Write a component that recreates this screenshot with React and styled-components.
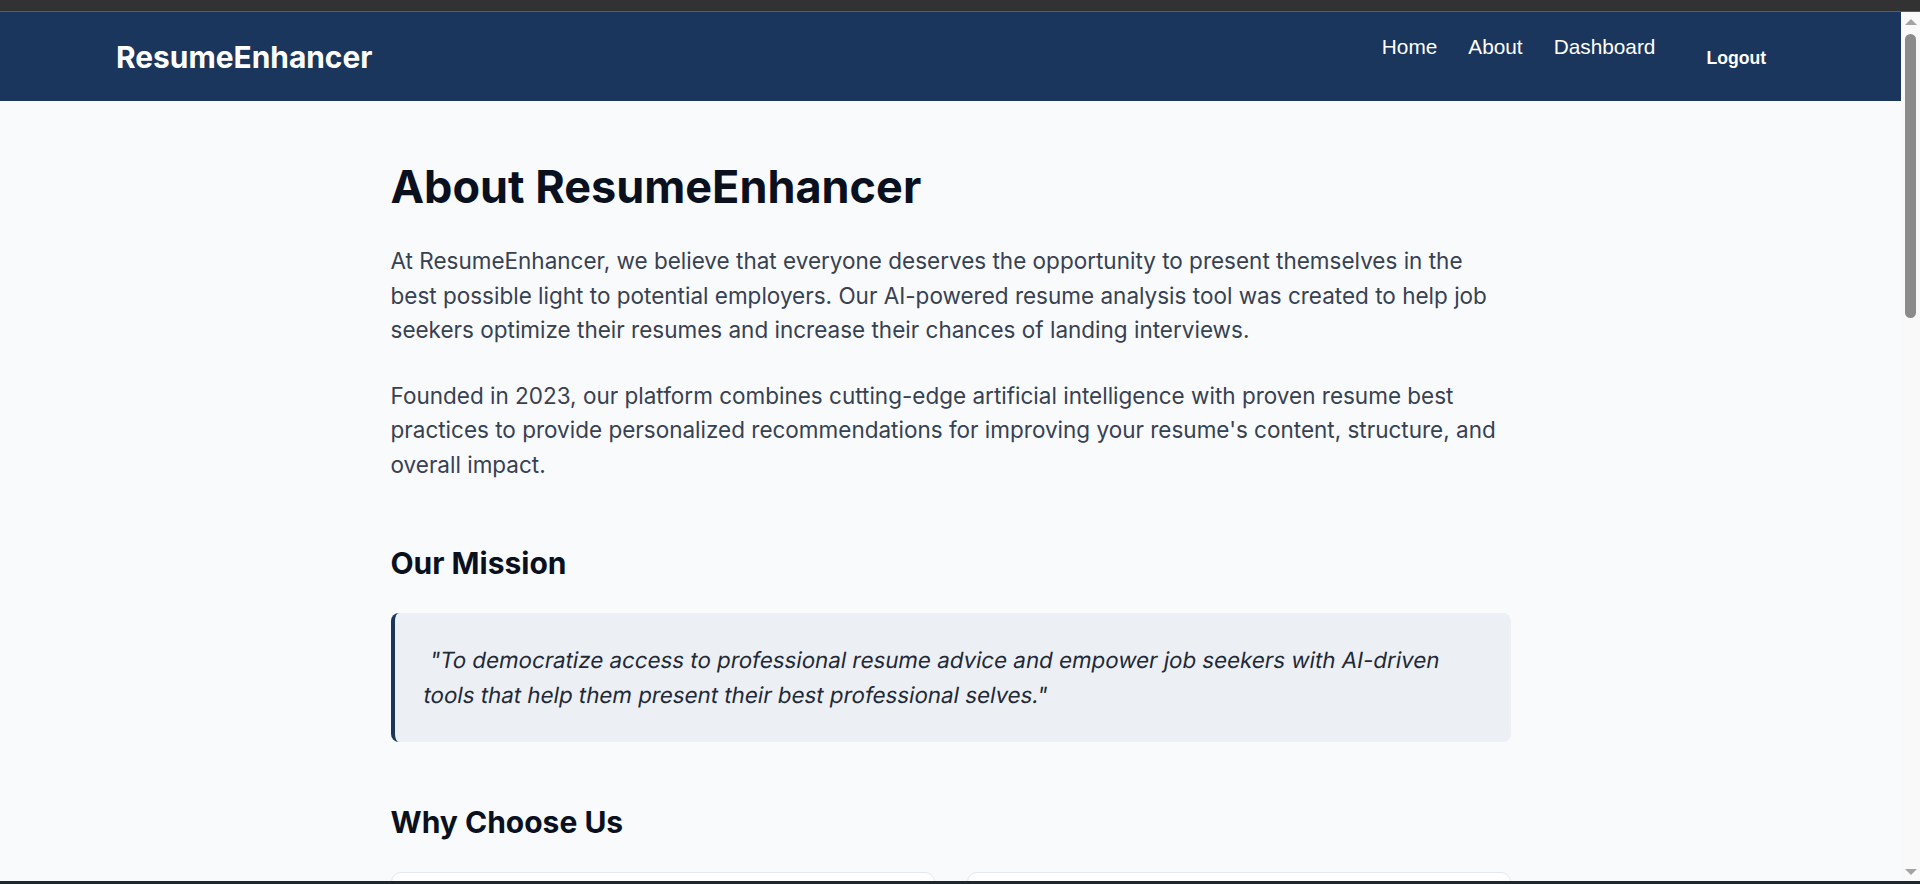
import React from 'react';
import styled, { createGlobalStyle } from 'styled-components';

const GlobalStyle = createGlobalStyle`
  *, *::before, *::after { box-sizing: border-box; }
  html, body { margin: 0; padding: 0; height: 100%; overflow: hidden; }
  body { font-family: Inter, "Noto Sans", sans-serif; background: #f8fafc; }
  #root { height: 100%; }
`;

const Frame = styled.div`
  height: 100vh;
  display: flex;
  flex-direction: column;
  background: #f8fafc;
`;

const WindowBar = styled.div`
  flex: 0 0 12px;
  background: #323232;
  border-bottom: 1px solid #5c5c5c;
`;

const WindowEdge = styled.div`
  flex: 0 0 3px;
  background: #1c2830;
`;

const Viewport = styled.div`
  flex: 1;
  min-height: 0;
  display: flex;
`;

const Scroller = styled.div`
  flex: 1;
  min-width: 0;
  overflow-y: auto;
  overflow-x: hidden;
  scrollbar-width: none;
  &::-webkit-scrollbar { display: none; }
`;

const ScrollRail = styled.div`
  flex: 0 0 19px;
  display: flex;
  flex-direction: column;
  align-items: center;
  background: #f9f9f9;
`;

const RailButton = styled.div`
  flex: 0 0 19px;
  width: 19px;
  display: flex;
  align-items: center;
  justify-content: center;
  &::before {
    content: '';
    width: 0;
    height: 0;
    border-left: 6px solid transparent;
    border-right: 6px solid transparent;
    ${p => (p.$down ? 'border-top' : 'border-bottom')}: 6px solid #a3a3a3;
  }
`;

const RailTrack = styled.div`
  flex: 1;
  width: 100%;
  display: flex;
  justify-content: center;
`;

const RailThumb = styled.div`
  margin-top: 3px;
  width: 11px;
  height: 284px;
  border-radius: 6px;
  background: #8b8b8b;
`;

const NavBar = styled.nav`
  height: 89px;
  background: #1b365d;
  display: flex;
  align-items: center;
  justify-content: space-between;
  padding: 0 119px 0 116px;
`;

const Brand = styled.a`
  font-family: Inter, sans-serif;
  font-weight: 700;
  font-size: 29.9px;
  color: #ffffff;
  text-decoration: none;
`;

const NavRight = styled.div`
  display: flex;
  align-items: center;
`;

const NavList = styled.ul`
  list-style: none;
  margin: 0 0 19px;
  padding: 0;
  display: flex;
  gap: 31px;
`;

const NavLink = styled.a`
  font-family: "Liberation Sans", Arial, sans-serif;
  font-size: 20.8px;
  color: #ffffff;
  text-decoration: none;
`;

const LogoutButton = styled.button`
  margin: 4px 0 0 35px;
  padding: 8px 16px;
  background: transparent;
  border: none;
  color: #ffffff;
  font-family: "Liberation Sans", Arial, sans-serif;
  font-size: 17.6px;
  font-weight: 700;
  cursor: pointer;
`;

const Main = styled.main`
  max-width: 1120px;
  margin: 0 auto;
  padding: 58px 0 96px;
`;

const Title = styled.h1`
  margin: 0 0 30px;
  font-size: 45px;
  font-weight: 700;
  line-height: normal;
  color: #0a101e;
`;

const Section = styled.section`
  margin-top: ${p => (p.$first ? '0' : '62px')};
`;

const Heading = styled.h2`
  margin: 0 0 32px;
  font-size: 30px;
  font-weight: 700;
  line-height: normal;
  color: #0a101e;
`;

const Text = styled.p`
  margin: 0 0 31px;
  font-size: 22.5px;
  line-height: 34.6px;
  color: #374151;
  &:last-child { margin-bottom: 0; }
`;

const Quote = styled.blockquote`
  margin: 0;
  padding: 30px 32px;
  background: #ecf0f5;
  border-left: 4px solid #1b365d;
  border-radius: 8px;
`;

const QuoteText = styled.p`
  margin: 0;
  font-size: 22.3px;
  line-height: 34.6px;
  color: #1f2937;
  transform: skewX(-10deg);
  transform-origin: left center;
`;

const CardGrid = styled.div`
  display: grid;
  grid-template-columns: repeat(${p => p.$cols || 2}, 1fr);
  gap: 32px;
`;

const Card = styled.div`
  background: #ffffff;
  border: 1px solid #e2e8f0;
  border-radius: 10px;
  padding: 32px;
`;

const CardTitle = styled.h3`
  margin: 0 0 12px;
  font-size: 22px;
  font-weight: 600;
  color: #1b365d;
`;

const CardText = styled.p`
  margin: 0;
  font-size: 17px;
  line-height: 1.7;
  color: #4b5563;
`;

const Steps = styled.ol`
  margin: 0;
  padding: 0;
  list-style: none;
  display: flex;
  flex-direction: column;
  gap: 20px;
`;

const Step = styled.li`
  display: flex;
  gap: 20px;
  align-items: flex-start;
`;

const StepNumber = styled.span`
  flex: 0 0 44px;
  height: 44px;
  border-radius: 50%;
  background: #1b365d;
  color: #ffffff;
  display: flex;
  align-items: center;
  justify-content: center;
  font-weight: 700;
  font-size: 18px;
`;

const StepBody = styled.div`
  display: flex;
  flex-direction: column;
  gap: 6px;
`;

const CtaButton = styled.a`
  display: inline-block;
  padding: 14px 28px;
  border-radius: 8px;
  background: #1b365d;
  color: #ffffff;
  font-weight: 600;
  font-size: 18px;
  text-decoration: none;
`;

const Footer = styled.footer`
  background: #1b365d;
  color: #cbd5e1;
  padding: 40px 116px;
  font-size: 16px;
  display: flex;
  justify-content: space-between;
`;

const features = [
  ['AI-Powered Analysis', 'Our advanced algorithms review every section of your resume and identify opportunities to strengthen your content.'],
  ['Actionable Feedback', 'Receive clear, specific suggestions you can apply right away to improve wording, formatting and structure.'],
  ['ATS Optimization', 'Make sure your resume passes applicant tracking systems by using the right keywords and formats.'],
  ['Privacy First', 'Your documents are processed securely and never shared with third parties without your consent.'],
];

const steps = [
  ['Upload your resume', 'Upload your resume in PDF or DOCX format in just a few seconds.'],
  ['Get your analysis', 'Our AI reviews your content, structure and keywords and scores your resume.'],
  ['Apply improvements', 'Follow personalized recommendations and download your enhanced resume.'],
];

const team = [
  ['Engineering', 'Experts in machine learning and natural language processing.'],
  ['Career Coaching', 'Recruiters and career coaches with years of hiring experience.'],
  ['Design', 'Focused on making resume improvement simple and approachable.'],
];

export default function App() {
  return (
    <>
      <GlobalStyle />
      <Frame>
        <WindowBar />
        <Viewport>
          <Scroller>
            <NavBar>
              <Brand href="#">ResumeEnhancer</Brand>
              <NavRight>
                <NavList>
                  <li><NavLink href="#">Home</NavLink></li>
                  <li><NavLink href="#">About</NavLink></li>
                  <li><NavLink href="#">Dashboard</NavLink></li>
                </NavList>
                <LogoutButton>Logout</LogoutButton>
              </NavRight>
            </NavBar>
            <Main>
              <Section $first>
                <Title>About ResumeEnhancer</Title>
                <Text>
                  At ResumeEnhancer, we believe that everyone deserves the opportunity to present themselves in the
                  best possible light to potential employers. Our AI-powered resume analysis tool was created to help job
                  seekers optimize their resumes and increase their chances of landing interviews.
                </Text>
                <Text>
                  Founded in 2023, our platform combines cutting-edge artificial intelligence with proven resume best
                  practices to provide personalized recommendations for improving your resume's content, structure, and
                  overall impact.
                </Text>
              </Section>
              <Section>
                <Heading>Our Mission</Heading>
                <Quote>
                  <QuoteText>
                    "To democratize access to professional resume advice and empower job seekers with AI-driven tools
                    that help them present their best professional selves."
                  </QuoteText>
                </Quote>
              </Section>
              <Section>
                <Heading>Why Choose Us</Heading>
                <CardGrid>
                  {features.map(([t, d]) => (
                    <Card key={t}>
                      <CardTitle>{t}</CardTitle>
                      <CardText>{d}</CardText>
                    </Card>
                  ))}
                </CardGrid>
              </Section>
              <Section>
                <Heading>How It Works</Heading>
                <Steps>
                  {steps.map(([t, d], i) => (
                    <Step key={t}>
                      <StepNumber>{i + 1}</StepNumber>
                      <StepBody>
                        <CardTitle>{t}</CardTitle>
                        <CardText>{d}</CardText>
                      </StepBody>
                    </Step>
                  ))}
                </Steps>
              </Section>
              <Section>
                <Heading>Our Team</Heading>
                <CardGrid $cols={3}>
                  {team.map(([t, d]) => (
                    <Card key={t}>
                      <CardTitle>{t}</CardTitle>
                      <CardText>{d}</CardText>
                    </Card>
                  ))}
                </CardGrid>
              </Section>
              <Section>
                <Heading>Get Started</Heading>
                <Text>Ready to take your resume to the next level? Upload your resume and get your analysis today.</Text>
                <CtaButton href="#">Analyze My Resume</CtaButton>
              </Section>
            </Main>
            <Footer>
              <span>© 2023 ResumeEnhancer. All rights reserved.</span>
              <span>Privacy Policy · Terms of Service</span>
            </Footer>
          </Scroller>
          <ScrollRail>
            <RailButton />
            <RailTrack>
              <RailThumb />
            </RailTrack>
            <RailButton $down />
          </ScrollRail>
        </Viewport>
        <WindowEdge />
      </Frame>
    </>
  );
}
